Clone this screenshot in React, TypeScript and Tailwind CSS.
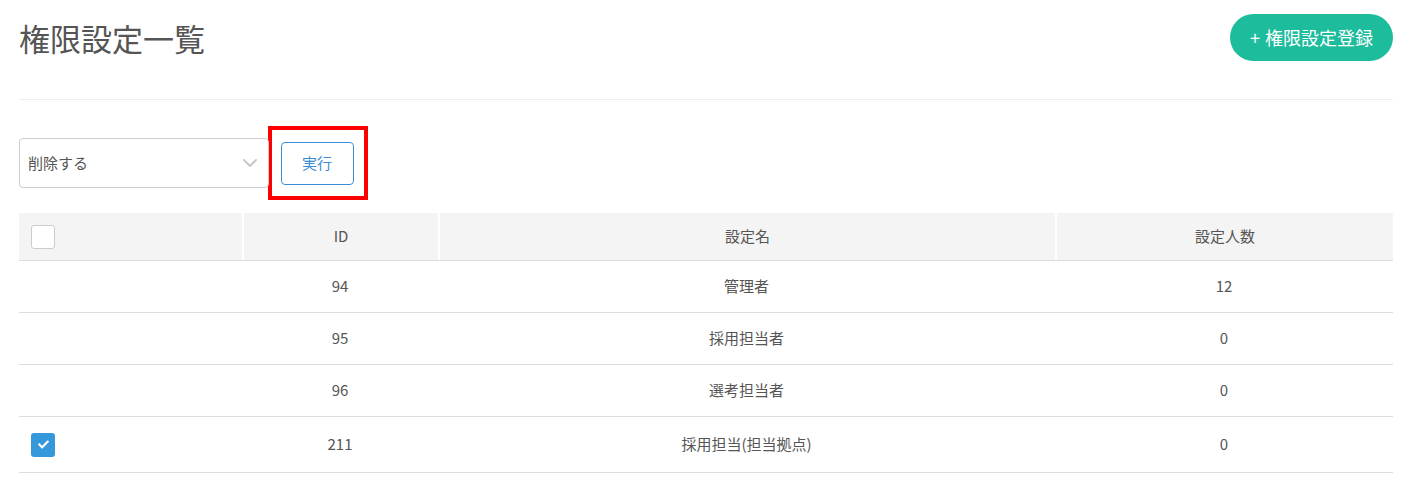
import { ChevronDown } from "lucide-react";
import { FaCheck } from "react-icons/fa";

const rows = [
  { id: 94, name: "管理者", count: 12, checked: false },
  { id: 95, name: "採用担当者", count: 0, checked: false },
  { id: 96, name: "選考担当者", count: 0, checked: false },
  { id: 211, name: "採用担当(担当拠点)", count: 0, checked: true },
];

function Checkbox({ checked }: { checked: boolean }) {
  if (checked) {
    return (
      <span className="flex h-6 w-6 items-center justify-center rounded-[3px] bg-[#3498db]">
        <FaCheck className="h-[11px] w-[11px] text-white" />
      </span>
    );
  }
  return <span className="block h-6 w-6 rounded-[3px] border border-[#cccccc] bg-white" />;
}

export default function App() {
  return (
    <div
      className="min-h-[493px] bg-white pl-[19px] pr-[26px] pt-[14px] text-[#555555]"
      style={{ fontFamily: '"Noto Sans CJK JP", "Noto Sans", sans-serif' }}
    >
      {/* ヘッダー */}
      <div className="flex items-center justify-between pb-[38px] border-b border-[#eeeeee]">
        <h1 className="text-[31px] leading-[47px] text-[#555555]">権限設定一覧</h1>
        <button className="flex h-[47px] items-center rounded-full bg-[#1dbc9c] px-[20px] text-[18px] text-white">
          <span className="mr-[5px]">+</span>権限設定登録
        </button>
      </div>

      {/* 一括操作 */}
      <div className="flex items-center pt-[26px]">
        <div className="relative flex h-[50px] w-[250px] items-center rounded-[4px] border border-[#cccccc] pl-[8px] text-[15px]">
          削除する
          <ChevronDown className="absolute right-[6px] h-6 w-6 text-[#c8c8c8]" strokeWidth={2} />
        </div>
        <div className="-ml-[1px] flex h-[74px] w-[100px] items-center justify-center border-[4px] border-[#ff0000]">
          <button className="-ml-[2px] h-[43px] w-[73px] rounded-[4px] border border-[#3b8ed6] text-[15px] text-[#3b8ed6]">
            実行
          </button>
        </div>
      </div>

      {/* テーブル */}
      <div className="mt-[13px] text-[15px]">
        <div className="grid h-[48px] grid-cols-[223px_196px_617px_1fr] border-b border-[#dddddd] bg-[#f4f4f4]">
          <div className="flex items-center pl-[12px]">
            <Checkbox checked={false} />
          </div>
          <div className="flex items-center justify-center border-l-2 border-white">ID</div>
          <div className="flex items-center justify-center border-l-2 border-white">設定名</div>
          <div className="flex items-center justify-center border-l-2 border-white">設定人数</div>
        </div>
        {rows.map((r) => (
          <div
            key={r.id}
            className={`grid grid-cols-[223px_196px_617px_1fr] border-b border-[#dddddd] ${
              r.checked ? "h-[56px]" : "h-[52px]"
            }`}
          >
            <div className="flex items-center pl-[12px]">
              {r.checked && <Checkbox checked />}
            </div>
            <div className="flex items-center justify-center">{r.id}</div>
            <div className="flex items-center justify-center">{r.name}</div>
            <div className="flex items-center justify-center">{r.count}</div>
          </div>
        ))}
      </div>
    </div>
  );
}
